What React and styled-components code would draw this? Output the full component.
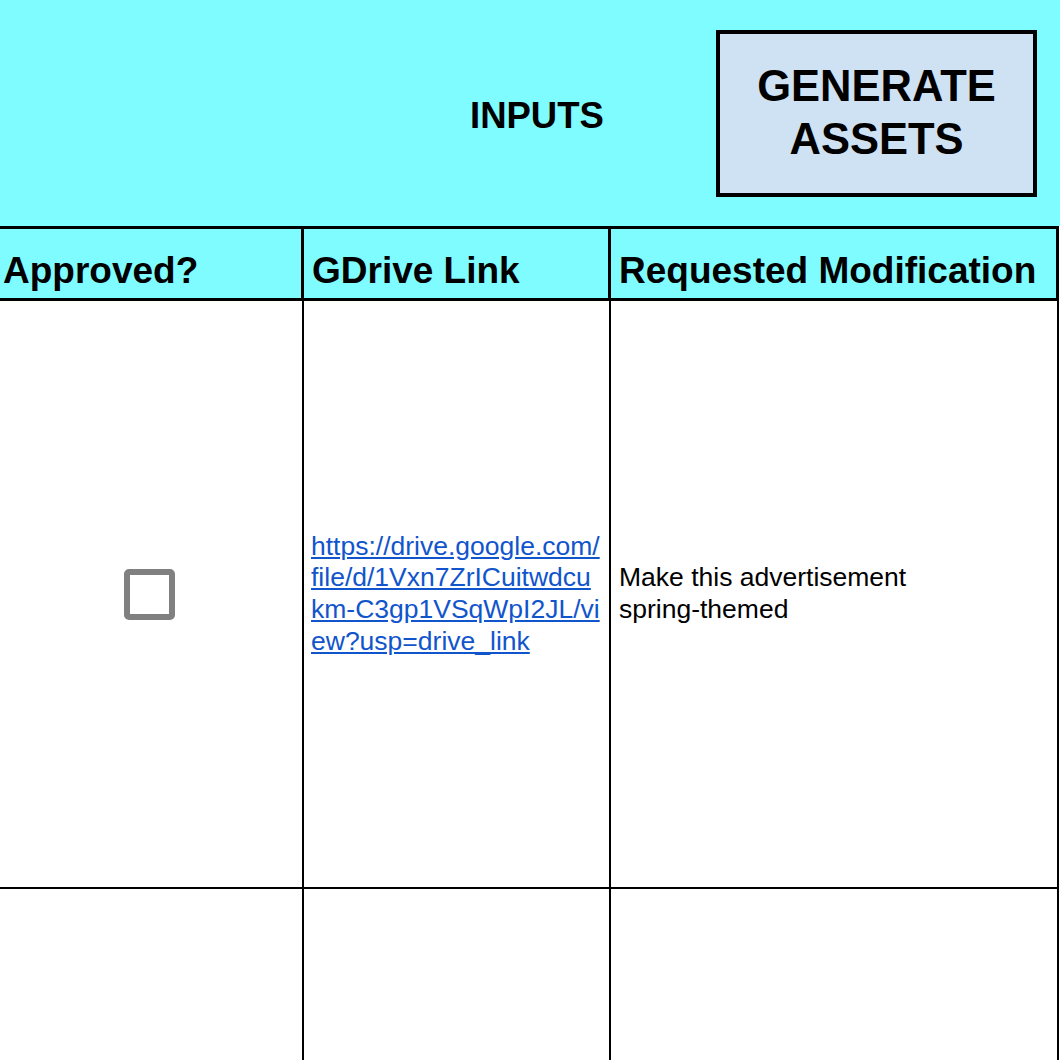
import React from 'react';
import styled, { createGlobalStyle } from 'styled-components';

const GlobalStyle = createGlobalStyle`
    html, body {
        margin: 0;
        padding: 0;
        background: #ffffff;
        overflow: hidden;
    }
    body {
        font-family: "Liberation Sans", Arial, sans-serif;
        color: #000000;
    }
`;

const Sheet = styled.div`
    width: 1060px;
    height: 1060px;
    overflow: hidden;
    background: #ffffff;
`;

const Banner = styled.div`
    height: 226px;
    box-sizing: border-box;
    background: #7ffcff;
    display: flex;
    align-items: center;
    padding: 2px 23px 0 470px;
`;

const Title = styled.div`
    font-size: 36.5px;
    font-weight: bold;
    line-height: 1;
    margin-top: 4px;
`;

const GenerateButton = styled.button`
    margin-left: auto;
    width: 321px;
    height: 167px;
    box-sizing: border-box;
    background: #cfe2f3;
    border: 4px solid #000000;
    font-family: "Liberation Sans", Arial, sans-serif;
    font-size: 43.5px;
    font-weight: bold;
    line-height: 53px;
    color: #000000;
    padding: 0;
    cursor: pointer;
    margin-top: -2px;
`;

const Grid = styled.div`
    display: grid;
    grid-template-columns: 304px 307px 448px;
`;

const HeadCell = styled.div`
    height: 75px;
    box-sizing: border-box;
    background: #7ffcff;
    border-top: 3px solid #000000;
    border-bottom: 3px solid #000000;
    border-right: 3px solid #000000;
    display: flex;
    align-items: flex-end;
    padding: 0 0 6px ${p => p.$pad}px;
    font-size: 37px;
    font-weight: bold;
    line-height: 42px;
    white-space: nowrap;
`;

const Cell = styled.div`
    height: ${p => p.$height}px;
    box-sizing: border-box;
    border-right: 2px solid #000000;
    border-bottom: 2px solid #000000;
    display: flex;
    align-items: center;
    justify-content: ${p => (p.$center ? 'center' : 'flex-start')};
    padding: 0 5px 0 ${p => p.$pad}px;
    font-size: 26.5px;
    line-height: 31.75px;
`;

const Checkbox = styled.div`
    width: 51px;
    height: 51px;
    box-sizing: border-box;
    border: 6px solid #808080;
    border-radius: 5px;
    background: #ffffff;
    margin-left: 2px;
`;

const Link = styled.a`
    color: #1155cc;
    text-decoration: underline;
    word-break: break-all;
    display: block;
    width: 290px;
`;

const Note = styled.div`
    width: 320px;
`;

const rows = [
    {
        link: 'https://drive.google.com/file/d/1Vxn7ZrICuitwdcukm-C3gp1VSqWpI2JL/view?usp=drive_link',
        note: 'Make this advertisement spring-themed',
        height: 588,
    },
    { link: '', note: '', height: 400 },
];

const App = () => {
    return (
        <Sheet>
            <GlobalStyle />
            <Banner>
                <Title>INPUTS</Title>
                <GenerateButton>
                    GENERATE
                    <br />
                    ASSETS
                </GenerateButton>
            </Banner>
            <Grid>
                <HeadCell $pad={3}>Approved?</HeadCell>
                <HeadCell $pad={8}>GDrive Link</HeadCell>
                <HeadCell $pad={8}>Requested Modification</HeadCell>
                {rows.map((row, i) => (
                    <React.Fragment key={i}>
                        <Cell $height={row.height} $center $pad={0}>
                            {row.link && <Checkbox />}
                        </Cell>
                        <Cell $height={row.height} $pad={7}>
                            {row.link && <Link href="#">{row.link}</Link>}
                        </Cell>
                        <Cell $height={row.height} $pad={8}>
                            {row.note && <Note>{row.note}</Note>}
                        </Cell>
                    </React.Fragment>
                ))}
            </Grid>
        </Sheet>
    );
};

export default App;
